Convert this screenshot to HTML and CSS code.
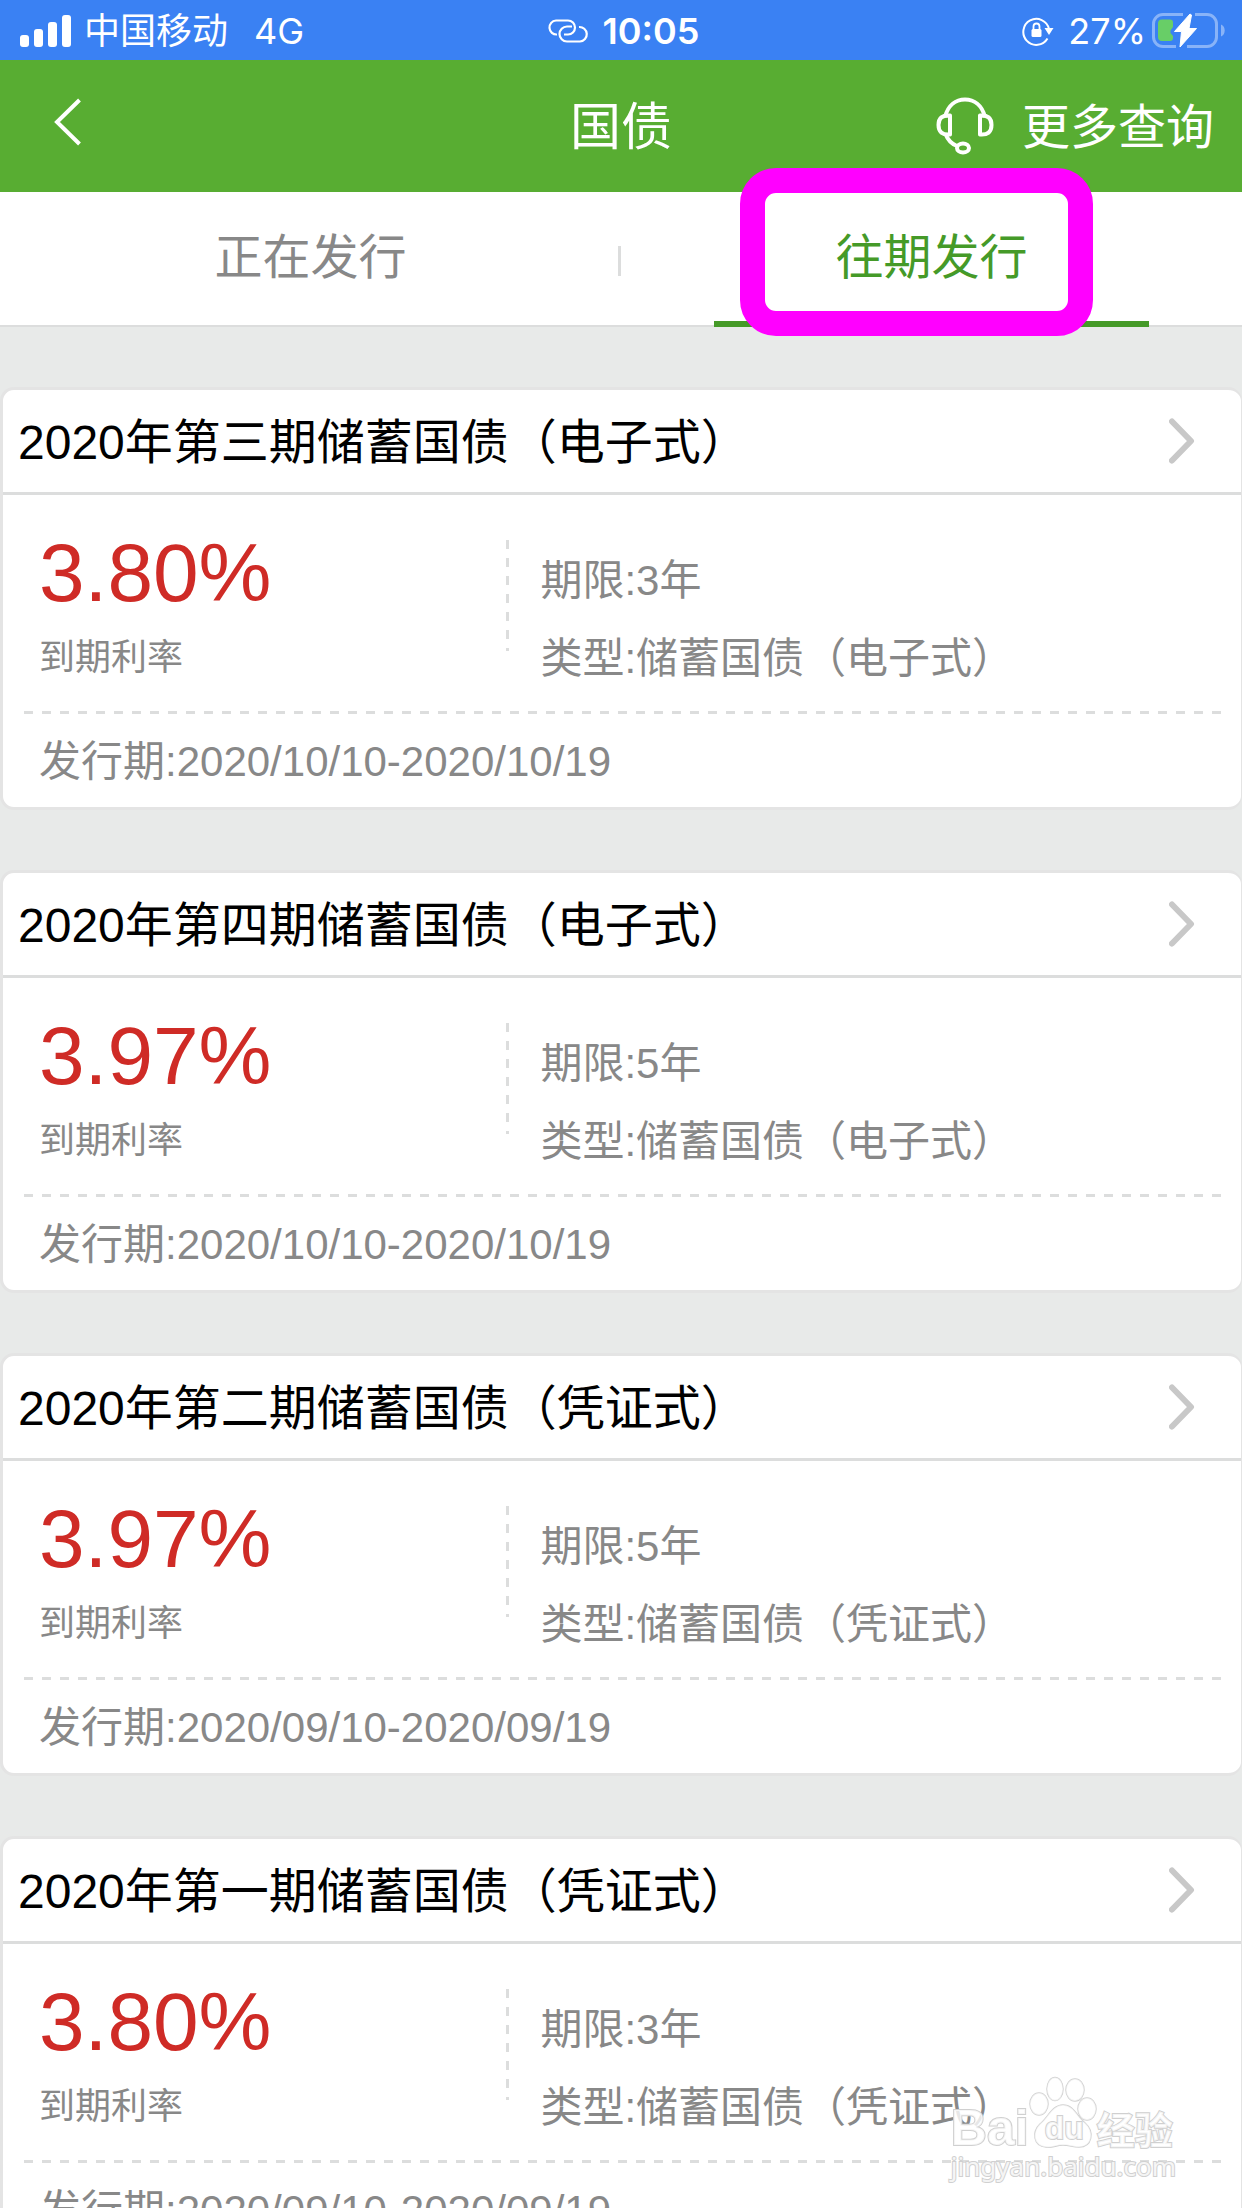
FILE: index.html
```html
<!DOCTYPE html>
<html lang="zh-CN">
<head>
<meta charset="utf-8">
<meta name="viewport" content="width=device-width, initial-scale=1">
<title>国债</title>
<link rel="stylesheet" href="styles.css">
</head>
<body>
<div class="status">
  <div class="status-left">
    <svg class="signal" width="52" height="32" viewBox="0 0 52 32" fill="#fff" aria-hidden="true"><rect x="0" y="20" width="9" height="12" rx="3"/><rect x="14" y="14" width="9" height="18" rx="3"/><rect x="28" y="7" width="9" height="25" rx="3"/><rect x="42" y="0" width="9" height="32" rx="3"/></svg>
    <span>中国移动</span>
    <span class="network">4G</span>
  </div>
  <div class="status-mid">
    <svg width="42" height="24" viewBox="0 0 42 24" fill="none" stroke="#fff" stroke-width="2.2" aria-hidden="true"><path d="M10 15.500A7 7 0 0 1 9 1.500H21A7 7 0 0 1 21 15.500H17"/><path d="M25 7.500H20A7.500 7.500 0 0 0 20 22.500H33A7 7 0 0 0 32 8"/></svg>
    <span class="time">10:05</span>
  </div>
  <div class="status-right">
    <svg width="32" height="30" viewBox="0 0 32 30" fill="none" stroke="#fff" aria-hidden="true"><path stroke-width="2" d="M25.500 22.500A13 13 0 1 1 27 13"/><path fill="#fff" stroke="none" d="M22.500 12H31.500L27 19Z"/><rect x="9.500" y="13" width="10" height="8" rx="1.500" fill="#fff" stroke="none"/><path stroke-width="1.800" d="M11.500 14V10.500A3 3 0 0 1 17.500 10.500V14"/></svg>
    <span class="percent">27%</span>
    <svg width="74" height="36" viewBox="0 0 74 36" aria-hidden="true"><path d="M31 1.500H11A9.500 9.500 0 0 0 1.500 11V24A9.500 9.500 0 0 0 11 33.500H24M43 1.500H55A9.500 9.500 0 0 1 64.500 11V24A9.500 9.500 0 0 1 55 33.500H35" fill="none" stroke="#fff" stroke-opacity=".4" stroke-width="3"/><path d="M69 11.500A6 6.500 0 0 1 69 23.500Z" fill="#fff" fill-opacity=".4"/><path d="M10 6.500H18Q21 6.500 21 9.500V14L18.500 17.500V20L21 23V25Q21 28 18 28H10Q6 28 6 24V10.500Q6 6.500 10 6.500Z" fill="#68ce67"/><path d="M38 1L22.500 18.500H29.500L28 34L44.500 15.500H37L39.500 2Z" fill="#fff" stroke="#fff" stroke-linejoin="round"/></svg>
  </div>
</div>

<header class="nav">
  <button class="back" type="button" aria-label="返回"><svg width="28" height="48" viewBox="0 0 28 48" fill="none" stroke="#fff" stroke-width="4" aria-hidden="true"><path d="M25.500 2L3 24L25.500 46"/></svg></button>
  <h1 class="nav-title">国债</h1>
  <a class="more" href="#more">
    <svg width="58" height="58" viewBox="0 0 58 58" fill="none" stroke="#fff" stroke-width="4" aria-hidden="true"><path d="M9 20C12 8 20 2.500 29 2.500S46 8 49 20"/><path d="M14 18.500V37.500Q2.500 38.500 2.500 28T14 18.500ZM44 18.500V37.500Q55.500 38.500 55.500 28T44 18.500Z" stroke-linejoin="round"/><path d="M9.500 37Q13 46 21 49"/><ellipse cx="27" cy="51" rx="6" ry="4.500"/></svg>
    <span>更多查询</span>
  </a>
</header>

<nav class="tabs">
  <a class="tab" href="#current">正在发行</a>
  <a class="tab active" href="#past" aria-current="page">往期发行<span class="highlight"></span></a>
</nav>

<main class="list">
  <article class="card">
    <a class="card-head" href="#bond-3"><h2>2020年第三期储蓄国债（电子式）</h2><svg class="chevron" width="26" height="46" viewBox="0 0 26 46" aria-hidden="true"><path d="M3 3.500L22 23L3 42.500"/></svg></a>
    <div class="card-body">
      <div class="yield"><strong>3.80%</strong><span>到期利率</span></div>
      <div class="facts"><p>期限:3年</p><p>类型:储蓄国债（电子式）</p></div>
    </div>
    <p class="period">发行期:2020/10/10-2020/10/19</p>
  </article>
  <article class="card">
    <a class="card-head" href="#bond-4"><h2>2020年第四期储蓄国债（电子式）</h2><svg class="chevron" width="26" height="46" viewBox="0 0 26 46" aria-hidden="true"><path d="M3 3.500L22 23L3 42.500"/></svg></a>
    <div class="card-body">
      <div class="yield"><strong>3.97%</strong><span>到期利率</span></div>
      <div class="facts"><p>期限:5年</p><p>类型:储蓄国债（电子式）</p></div>
    </div>
    <p class="period">发行期:2020/10/10-2020/10/19</p>
  </article>
  <article class="card">
    <a class="card-head" href="#bond-2"><h2>2020年第二期储蓄国债（凭证式）</h2><svg class="chevron" width="26" height="46" viewBox="0 0 26 46" aria-hidden="true"><path d="M3 3.500L22 23L3 42.500"/></svg></a>
    <div class="card-body">
      <div class="yield"><strong>3.97%</strong><span>到期利率</span></div>
      <div class="facts"><p>期限:5年</p><p>类型:储蓄国债（凭证式）</p></div>
    </div>
    <p class="period">发行期:2020/09/10-2020/09/19</p>
  </article>
  <article class="card">
    <a class="card-head" href="#bond-1"><h2>2020年第一期储蓄国债（凭证式）</h2><svg class="chevron" width="26" height="46" viewBox="0 0 26 46" aria-hidden="true"><path d="M3 3.500L22 23L3 42.500"/></svg></a>
    <div class="card-body">
      <div class="yield"><strong>3.80%</strong><span>到期利率</span></div>
      <div class="facts"><p>期限:3年</p><p>类型:储蓄国债（凭证式）</p></div>
    </div>
    <p class="period">发行期:2020/09/10-2020/09/19</p>
  </article>
</main>

<div class="watermark">
  <div class="brand">
    <span>Bai</span>
    <span class="paw"><svg width="68" height="74" viewBox="0 0 68 74" fill="#fff" fill-opacity=".7" stroke="#d0d0d0" stroke-width="1.500" aria-hidden="true"><ellipse cx="10" cy="28" rx="9" ry="11"/><ellipse cx="26" cy="13" rx="8" ry="11.500"/><ellipse cx="46" cy="14" rx="9" ry="11"/><ellipse cx="58" cy="33" rx="9" ry="11"/><path d="M34 29C45 29 48 41 56 47C66 56 63 71 50 71C43 71 41 69 34 69S24 72 17 71C4 70 3 56 11 48C19 42 23 29 34 29Z"/></svg><span class="du">du</span></span>
    <span class="brand-cn">经验</span>
  </div>
  <div class="site">jingyan.baidu.com</div>
</div>
</body>
</html>
```
FILE: styles.css
```css
* { box-sizing: border-box; }

body {
  margin: 0;
  height: 100vh;
  display: flex;
  flex-direction: column;
  position: relative;
  overflow: hidden;
  background: #e8eae9;
  color: #888;
  font-family: "Liberation Sans", "Noto Sans CJK SC", sans-serif;
}

h1, h2, p { margin: 0; font-weight: 400; }
a { color: inherit; text-decoration: none; }
svg { display: block; flex: none; }

/* status bar */
.status {
  flex: none;
  height: 60px;
  padding: 0 16px 0 20px;
  display: grid;
  grid-template-columns: 1fr auto 1fr;
  align-items: center;
  background: #3a81f3;
  color: #fff;
  font: 400 36px/62px Inter, "Noto Sans CJK SC", sans-serif;
}
.status-left, .status-mid, .status-right { display: flex; align-items: center; height: 62px; }
.status-left { gap: 12px; }
.network { padding-left: 14px; }
.status-mid { gap: 14px; }
.time { font-weight: 600; }
.status-right { justify-content: flex-end; gap: 6px; }
.percent { padding-left: 8px; }

/* title bar */
.nav {
  flex: none;
  height: 132px;
  padding: 0 28px;
  display: grid;
  grid-template-columns: 1fr auto 1fr;
  align-items: center;
  background: #58ad32;
  color: #fff;
}
.back { justify-self: start; padding: 0 0 8px 26px; border: 0; background: none; }
.nav-title { padding-top: 3px; font-size: 51px; line-height: 72px; }
.more {
  justify-self: end;
  display: flex;
  align-items: center;
  gap: 28px;
  font-size: 48px;
  line-height: 72px;
}
.more span { padding-top: 3px; }

/* tabs */
.tabs {
  flex: none;
  height: 135px;
  display: flex;
  align-items: stretch;
  border-bottom: 2px solid #dcdddd;
  background: #fff;
}
.tab {
  flex: 1;
  display: flex;
  align-items: center;
  justify-content: center;
  position: relative;
  padding-bottom: 2px;
  font-size: 48px;
  line-height: 72px;
}
.tab:first-child::after {
  content: "";
  position: absolute;
  right: 0;
  top: 54px;
  width: 3px;
  height: 30px;
  background: #dcdddd;
}
.active { color: #459a28; }
.active::before {
  content: "";
  position: absolute;
  left: 15%;
  right: 15%;
  bottom: -2px;
  height: 6px;
  background: #459a28;
}
.highlight {
  position: absolute;
  top: -24px;
  bottom: -11px;
  left: 119px;
  right: 149px;
  border: 25px solid #f0f;
  border-radius: 36px;
}

/* bond list */
.list {
  flex: 1;
  min-height: 0;
  overflow: hidden;
  padding-top: 60px;
  display: flex;
  flex-direction: column;
  gap: 60px;
}
.card {
  flex: none;
  border: 3px solid #e4e4e4;
  border-right-width: 1px;
  border-radius: 14px;
  background: #fff;
}
.card-head {
  height: 105px;
  padding: 0 46px 0 15px;
  display: flex;
  align-items: center;
  justify-content: space-between;
  border-bottom: 3px solid #dcdddd;
  color: #000;
}
.card-head h2 { padding-top: 4px; font-size: 48px; line-height: 72px; }
.chevron { fill: none; stroke: #c8c8c8; stroke-width: 6; stroke-linecap: round; stroke-linejoin: round; }
.card-body {
  height: 219px;
  margin: 0 16px 0 21px;
  padding-top: 30px;
  display: grid;
  grid-template-columns: 40% 1fr;
  background: repeating-linear-gradient(90deg, #dcdddd 0 9px, transparent 9px 18px) left bottom / 100% 3px no-repeat;
}
.yield {
  padding-left: 15px;
  display: flex;
  flex-direction: column;
  gap: 10px;
}
.yield strong { color: #cf2b26; font-size: 82px; font-weight: 400; line-height: 96px; }
.yield span { font-size: 36px; line-height: 54px; }
.facts {
  padding: 17px 0 0 36px;
  font-size: 42px;
  line-height: 78px;
  background: repeating-linear-gradient(#dcdddd 0 9px, transparent 9px 18px) 2px 15px / 3px 111px no-repeat;
}
.period { height: 93px; padding-left: 36px; font-size: 42px; line-height: 96px; }

/* watermark */
.watermark {
  position: absolute;
  right: 66px;
  bottom: 26px;
  color: rgba(255, 255, 255, .8);
  -webkit-text-stroke: 2px #d0d0d0;
  paint-order: stroke fill;
}
.brand { display: flex; align-items: flex-end; font: 700 50px/44px "Liberation Sans", sans-serif; }
.paw { position: relative; }
.du { position: absolute; left: 16px; bottom: 0; font-size: 32px; }
.brand-cn { font: 700 38px/44px "Noto Sans CJK SC", sans-serif; }
.site { font: 400 26px/32px "Noto Sans", sans-serif; }
```
